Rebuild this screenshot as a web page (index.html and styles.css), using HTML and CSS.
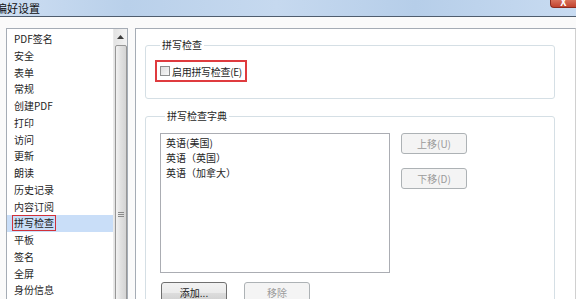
FILE: index.html
```html
<!DOCTYPE html>
<html lang="zh-CN">
<head>
    <meta charset="UTF-8">
    <title>偏好设置</title>
    <link rel="stylesheet" href="styles.css">
</head>
<body>

    <div class="window">
        <div class="titlebar">
            <span class="title">偏好设置</span>
            <span class="close-btn">X</span>
        </div>

        <div class="main">
            <!-- Category list -->
            <div class="nav">
                <ul class="nav-list">
                    <li>PDF签名</li>
                    <li>安全</li>
                    <li>表单</li>
                    <li>常规</li>
                    <li>创建PDF</li>
                    <li>打印</li>
                    <li>访问</li>
                    <li>更新</li>
                    <li>朗读</li>
                    <li>历史记录</li>
                    <li>内容订阅</li>
                    <li class="selected"><span class="mark">拼写检查</span></li>
                    <li>平板</li>
                    <li>签名</li>
                    <li>全屏</li>
                    <li>身份信息</li>
                </ul>
                <div class="scrollbar">
                    <div class="scroll-up">
                        <svg width="7" height="4" viewBox="0 0 7 4"><path d="M0 4 L3.5 0 L7 4 Z" fill="#3c3c3c"/></svg>
                    </div>
                    <div class="thumb">
                        <span class="grip"></span>
                    </div>
                </div>
            </div>

            <!-- Settings panel -->
            <div class="panel">
                <fieldset class="group group-spell">
                    <legend>拼写检查</legend>
                    <label class="check-row">
                        <span class="checkbox"></span>
                        <span class="check-label">启用拼写检查(E)</span>
                    </label>
                </fieldset>

                <fieldset class="group group-dict">
                    <legend>拼写检查字典</legend>
                    <div class="dict-row">
                        <ul class="dict-list">
                            <li>英语(美国)</li>
                            <li>英语（英国）</li>
                            <li>英语（加拿大）</li>
                        </ul>
                        <div class="side-buttons">
                            <button class="btn" disabled>上移(U)</button>
                            <button class="btn" disabled>下移(D)</button>
                        </div>
                    </div>
                    <div class="bottom-buttons">
                        <button class="btn">添加...</button>
                        <button class="btn" disabled>移除</button>
                    </div>
                </fieldset>
            </div>
        </div>
    </div>

</body>
</html>
```

FILE: styles.css
```css
/* General Reset */
* {
    margin: 0;
    padding: 0;
    box-sizing: border-box;
}

body, html {
    width: 576px;
    height: 299px;
    overflow: hidden;
    background: #fafafa;
    font-family: "Noto Sans CJK SC", "Noto Sans", sans-serif;
    font-size: 10px;
    color: #1e1e1e;
}

ul {
    list-style: none;
}

/* Title bar */
.titlebar {
    height: 17px;
    display: flex;
    align-items: flex-start;
    border-bottom: 1px solid #4f5d6e;
    background: linear-gradient(90deg, #cddef2 0%, #b9d0ea 22%, #c6d9ef 48%, #b6cee9 72%, #c8dbf1 100%);
}

.title {
    margin-left: -4px;
    font-size: 11px;
    line-height: 16px;
    color: #111;
    white-space: nowrap;
}

.close-btn {
    margin-left: auto;
    width: 26px;
    height: 8px;
    overflow: hidden;
    text-align: center;
    font-size: 10px;
    font-weight: bold;
    line-height: 3px;
    color: #fff;
    background: linear-gradient(#d8705a, #c2432f);
    border: 1px solid #8c2b1f;
    border-top: none;
    border-right: none;
    border-radius: 0 0 0 4px;
}

/* Main area */
.main {
    display: flex;
    padding: 11px 0 0 6px;
}

/* Category list */
.nav {
    width: 122px;
    height: 300px;
    display: flex;
    border: 1px solid #a5acb5;
    background: #fff;
}

.nav-list {
    width: 106px;
    padding-top: 2px;
}

.nav-list li {
    height: 16.75px;
    line-height: 16.75px;
    padding-left: 7px;
    white-space: nowrap;
}

.nav-list li.selected {
    background: #c9def8;
    padding-left: 5px;
}

.mark {
    display: inline-block;
    line-height: 14px;
    padding: 0 1px;
    border: 1px solid #d0313a;
}

/* Scrollbar */
.scrollbar {
    width: 14px;
    display: flex;
    flex-direction: column;
    background: linear-gradient(90deg, #e3e3e3, #f3f3f3);
    border-left: 1px solid #eaeaea;
}

.scroll-up {
    height: 15px;
    display: flex;
    align-items: center;
    justify-content: center;
}

.thumb {
    flex: 1;
    margin: 1px 0 0 1px;
    display: flex;
    justify-content: center;
    padding-top: 166px;
    border: 1px solid #979797;
    border-radius: 2px;
    background: linear-gradient(90deg, #f2f2f2, #e0e0e0 50%, #d4d4d4);
}

.grip {
    width: 6px;
    height: 6px;
    background: repeating-linear-gradient(#8a8a8a 0 1px, transparent 1px 2px);
}

/* Settings panel */
.panel {
    flex: 1;
    height: 300px;
    margin-left: 7px;
    padding: 0 20px 0 9px;
    border: 1px solid #a5acb5;
    border-right-color: #d0d0d0;
    background: #fff;
}

.group {
    border: 1px solid #d5dfe5;
    border-radius: 3px;
    padding: 0 0 16px 9px;
}

.group legend {
    margin-left: 5px;
    padding: 0 2px;
    font-size: 10px;
    line-height: 14px;
    white-space: nowrap;
}

.group-spell {
    margin-top: 9px;
}

.check-row {
    display: inline-flex;
    align-items: center;
    gap: 2px;
    height: 22px;
    margin-top: 8px;
    padding: 0 3px;
    border: 2px solid #df3b3f;
    white-space: nowrap;
}

.checkbox {
    width: 10px;
    height: 10px;
    flex-shrink: 0;
    border: 1px solid #8e8f8f;
    background: linear-gradient(135deg, #dcdcdc, #f8f8f8);
}

.check-label {
    letter-spacing: -0.3px;
}

.group-dict {
    margin-top: 10px;
    padding-left: 14px;
}

.dict-row {
    display: flex;
    margin-top: 10px;
}

.dict-list {
    width: 230px;
    height: 140px;
    padding: 1px 5px;
    border: 1px solid #abadb3;
    line-height: 15px;
    white-space: nowrap;
}

.side-buttons {
    display: flex;
    flex-direction: column;
    gap: 14px;
    margin-left: 11px;
}

.btn {
    width: 66px;
    height: 21px;
    font-family: inherit;
    font-size: 10px;
    color: #222;
    border: 1px solid #707070;
    border-radius: 3px;
    background: linear-gradient(#f2f2f2, #ebebeb 50%, #dddddd 51%, #cfcfcf);
}

.btn:disabled {
    color: #9b9b9b;
    border-color: #adb2b5;
    background: #f4f4f4;
}

.bottom-buttons {
    display: flex;
    gap: 17px;
    margin: 9px 0 0 1px;
}
```
